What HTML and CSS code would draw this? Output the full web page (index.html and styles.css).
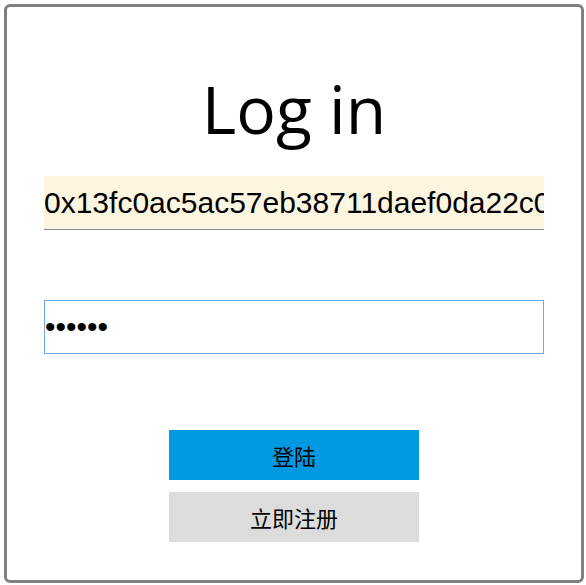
FILE: index.html
```html
<!DOCTYPE html>
<html lang="zh">
<head>
<meta charset="utf-8">
<title>Log in</title>
<link rel="stylesheet" href="styles.css">
</head>
<body>
<div class="box">
  <h1 class="title">Log in</h1>
  <input class="field field-addr" type="text" value="0x13fc0ac5ac57eb38711daef0da22c0f1a2b3c4d5">
  <input class="field field-pass" type="password" value="123456">
  <div class="actions">
    <button class="btn btn-primary">登陆</button>
    <button class="btn btn-secondary">立即注册</button>
  </div>
</div>
</body>
</html>
```
FILE: styles.css
```css
html, body {
  margin: 0;
  padding: 0;
  background: #fff;
}
.box {
  box-sizing: border-box;
  margin: 4px;
  width: 580px;
  height: 579px;
  border: 3px solid #808080;
  border-radius: 6px;
  display: flex;
  flex-direction: column;
  align-items: center;
}
.title {
  margin: 59px 0 0 0;
  font-family: "Open Sans", sans-serif;
  font-weight: 400;
  font-size: 66px;
  line-height: 84px;
  height: 84px;
  color: #000;
}
.field {
  box-sizing: border-box;
  width: 500px;
  height: 54px;
  padding: 0;
  margin: 0;
  font-family: "Liberation Sans", Arial, sans-serif;
  font-size: 30px;
  color: #000;
  outline: none;
}
.field-addr {
  margin-top: 26px;
  border: none;
  border-bottom: 1px solid #8a8a8a;
  background: #fcf5e0;
}
.field-pass {
  margin-top: 70px;
  border: 1px solid #72a5f2;
  background: #fff;
}
.actions {
  margin-top: 76px;
  display: flex;
  flex-direction: column;
  gap: 12px;
}
.btn {
  width: 250px;
  height: 50px;
  border: none;
  margin: 0;
  padding: 0;
  font-family: "Noto Sans CJK SC", sans-serif;
  font-size: 22px;
  color: #000;
}
.btn-primary {
  background: #0099e2;
}
.btn-secondary {
  background: #dcdcdc;
}
```
